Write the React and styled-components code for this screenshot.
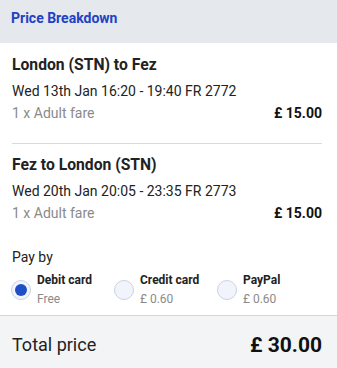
import styled, { createGlobalStyle } from "styled-components"

const Global = createGlobalStyle`
    body { margin: 0; font-family: Roboto, "Liberation Sans", sans-serif; background: #fff; }
`

const Panel = styled.div`
    width: 337px;
    height: 368px;
    display: flex;
    flex-direction: column;
    color: #222;
`

const Header = styled.div`
    height: 43px;
    background: #e5e8ec;
    padding: 9px 11px 0;
    box-sizing: border-box;
    font-size: 14px;
    line-height: 18px;
    font-weight: 700;
    color: #2142c4;
`

const Body = styled.div`
    padding: 0 15px 0 12px;
`

const Leg = styled.div`
    padding: ${({last}) => last ? "12px 0 0" : "13px 0 21px"};
    border-bottom: ${({last}) => last ? "none" : "1px solid #d9d9d9"};
`

const LegTitle = styled.div`
    font-size: 15.7px;
    font-weight: 700;
    line-height: 18px;
    margin-bottom: 8px;
`

const LegTime = styled.div`
    font-size: 14px;
    line-height: 18px;
    margin-bottom: 4px;
`

const FareRow = styled.div`
    display: flex;
    justify-content: space-between;
    align-items: center;
    font-size: 14px;
    line-height: 18px;
    color: #8a8a8a;
    b { color: #111; font-weight: 700; }
`

const PayBy = styled.div`
    font-size: 14px;
    line-height: 18px;
    margin: 26px 0 6px;
`

const Options = styled.div`
    display: grid;
    grid-template-columns: 103px 103px 1fr;
    margin-left: -1px;
`

const Option = styled.div`
    display: flex;
    gap: 6px;
    align-items: flex-start;
`

const Radio = styled.span`
    width: 20px;
    height: 20px;
    margin-top: 8px;
    border-radius: 50%;
    box-sizing: border-box;
    border: 1px solid #c9d2e8;
    background: #f1f4fb;
    display: flex;
    align-items: center;
    justify-content: center;
    &::after {
        content: "";
        display: ${({checked}) => checked ? "block" : "none"};
        width: 12px;
        height: 12px;
        border-radius: 50%;
        background: #1f4fc6;
    }
`

const OptLabel = styled.div`
    font-size: 12px;
    font-weight: 700;
    line-height: 16px;
    color: #222;
`

const OptFee = styled.div`
    font-size: 12px;
    line-height: 16px;
    margin-top: 3px;
    color: #8a8a8a;
`

const Footer = styled.div`
    margin-top: auto;
    height: 53px;
    background: #f3f4f6;
    border-top: 1px solid #d6d6d6;
    display: flex;
    justify-content: space-between;
    align-items: center;
    padding: 5px 15px 0 12px;
    box-sizing: border-box;
    font-size: 18px;
    color: #222;
    b { font-size: 21px; font-weight: 700; color: #111; }
`

const legs = [
    { title: "London (STN) to Fez", time: "Wed 13th Jan 16:20 - 19:40 FR 2772" },
    { title: "Fez to London (STN)", time: "Wed 20th Jan 20:05 - 23:35 FR 2773" },
]

const methods = [
    { label: "Debit card", fee: "Free", checked: true },
    { label: "Credit card", fee: "£ 0.60" },
    { label: "PayPal", fee: "£ 0.60" },
]

export default function App() {
    return (
        <Panel>
            <Global />
            <Header>Price Breakdown</Header>
            <Body>
                {legs.map((l, i) => (
                    <Leg key={l.title} last={i === legs.length - 1}>
                        <LegTitle>{l.title}</LegTitle>
                        <LegTime>{l.time}</LegTime>
                        <FareRow>
                            <span>1 x Adult fare</span>
                            <b>£ 15.00</b>
                        </FareRow>
                    </Leg>
                ))}
                <PayBy>Pay by</PayBy>
                <Options>
                    {methods.map(m => (
                        <Option key={m.label}>
                            <Radio checked={m.checked} />
                            <div>
                                <OptLabel>{m.label}</OptLabel>
                                <OptFee>{m.fee}</OptFee>
                            </div>
                        </Option>
                    ))}
                </Options>
            </Body>
            <Footer>
                <span>Total price</span>
                <b>£ 30.00</b>
            </Footer>
        </Panel>
    )
}
